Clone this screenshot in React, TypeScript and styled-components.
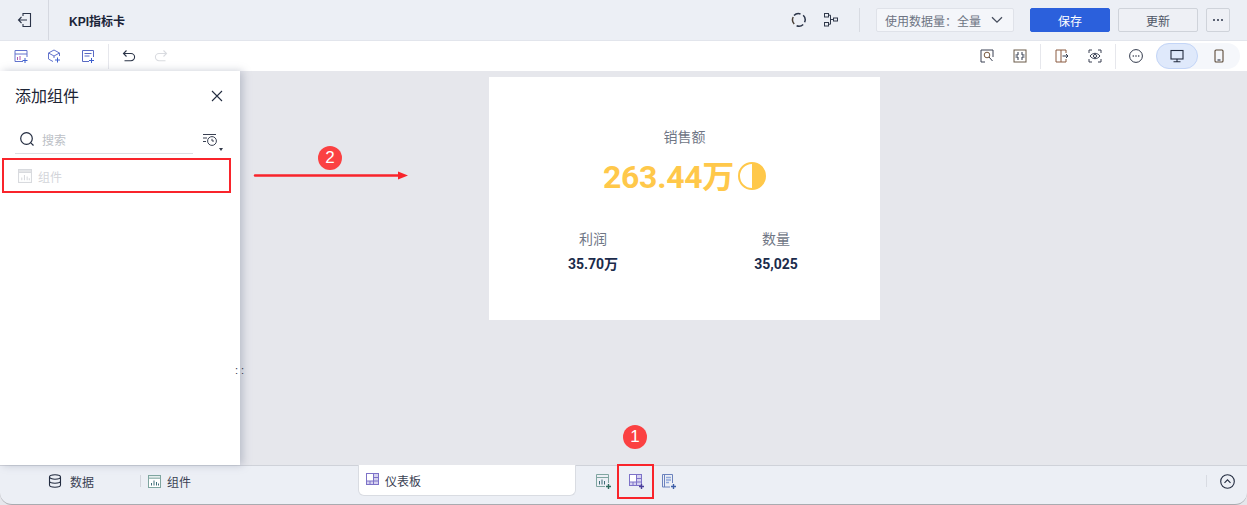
import React from 'react';
import styled, { createGlobalStyle } from 'styled-components';

const GlobalStyle = createGlobalStyle`
  html, body { margin: 0; padding: 0; background: #fff; }
  body { font-family: "Liberation Sans", "Noto Sans CJK SC", sans-serif; overflow: hidden; }
`;

const Page = styled.div`
  position: relative;
  width: 1247px;
  height: 505px;
  display: flex;
  flex-direction: column;
  overflow: hidden;
  color: #1d2b45;
`;

const TopBar = styled.header`
  height: 41px;
  box-sizing: border-box;
  flex: none;
  display: flex;
  align-items: center;
  background: #eceff5;
  border-bottom: 1px solid #e2e5ec;
`;

const BackCell = styled.div`
  width: 49px;
  height: 40px;
  box-sizing: border-box;
  display: flex;
  align-items: center;
  justify-content: center;
  border-right: 1px solid #d5d8e0;
`;

const Title = styled.div`
  margin-left: 20px;
  font-size: 12px;
  font-weight: 700;
  color: #1a2438;
  flex: 1;
`;

const TopActions = styled.div`
  display: flex;
  align-items: center;
  margin-right: 17px;
`;

const DataSelect = styled.div`
  width: 138px;
  height: 24px;
  box-sizing: border-box;
  display: flex;
  align-items: center;
  justify-content: space-between;
  padding: 0 10px 0 8px;
  background: #f4f6fa;
  border: 1px solid #dfe2e9;
  border-radius: 2px;
  font-size: 12px;
  color: #6d7483;
  margin-right: 16px;
`;

const Button = styled.button<{ $primary?: boolean; $w: number }>`
  width: ${p => p.$w}px;
  height: 24px;
  box-sizing: border-box;
  margin: 0 8px 0 0;
  padding: 0;
  border-radius: 2px;
  font-family: inherit;
  font-size: 12px;
  display: flex;
  align-items: center;
  justify-content: center;
  background: ${p => (p.$primary ? '#2b60dc' : '#eef0f5')};
  color: ${p => (p.$primary ? '#fff' : '#4f5666')};
  border: 1px solid ${p => (p.$primary ? '#2b60dc' : '#cfd3da')};
  &:last-child { margin-right: 0; }
`;

const VLine = styled.span<{ $h: number; $mx: number; $c?: string }>`
  width: 1px;
  height: ${p => p.$h}px;
  flex: none;
  background: ${p => p.$c ?? '#d8dbe2'};
  margin: 0 ${p => p.$mx}px;
`;

const ToolBar = styled.div`
  height: 30px;
  flex: none;
  display: flex;
  align-items: center;
  background: #fff;
  padding: 0 7px 0 14px;
`;

const ToolGroup = styled.div`
  display: flex;
  align-items: center;
  flex: 1;
`;

const IconSlot = styled.span<{ $w: number }>`
  width: ${p => p.$w}px;
  flex: none;
  display: flex;
  align-items: center;
  justify-content: flex-start;
  line-height: 0;
`;

const DeviceSwitch = styled.div`
  width: 84px;
  height: 26px;
  display: flex;
  border-radius: 13px;
  background: #f5f7fb;
`;

const DeviceTab = styled.div<{ $active?: boolean }>`
  width: 42px;
  height: 26px;
  box-sizing: border-box;
  display: flex;
  align-items: center;
  justify-content: center;
  border-radius: 13px;
  background: ${p => (p.$active ? '#dfe9fb' : 'transparent')};
  border: 1px solid ${p => (p.$active ? '#c3d5f7' : 'transparent')};
`;

const Main = styled.main`
  flex: 1;
  min-height: 0;
  display: flex;
  background: #e6e7ec;
`;

const Panel = styled.aside`
  position: relative;
  width: 240px;
  flex: none;
  background: #fff;
  box-shadow: 3px 0 8px rgba(120, 128, 150, 0.4);
  z-index: 1;
`;

const PanelHead = styled.div`
  height: 49px;
  display: flex;
  align-items: center;
  justify-content: space-between;
  padding: 0 17px 0 15px;
`;

const PanelTitle = styled.span`
  font-size: 16px;
  color: #1d2536;
  margin-bottom: 2px;
`;

const SearchRow = styled.div`
  display: flex;
  align-items: flex-start;
  padding: 8px 0 0 15px;
`;

const SearchBox = styled.div`
  width: 178px;
  height: 26px;
  box-sizing: border-box;
  display: flex;
  align-items: center;
  gap: 7px;
  padding: 0 0 3px 4px;
  border-bottom: 1px solid #dcdee3;
  font-size: 12px;
  color: #bcbfc6;
`;

const FilterBtn = styled.div`
  position: relative;
  margin: 5px 0 0 9px;
  line-height: 0;
`;

const Caret = styled.i`
  position: absolute;
  left: 17px;
  top: 15px;
  width: 0;
  height: 0;
  border: 2.5px solid transparent;
  border-top: 3px solid #333a4a;
`;

const ComponentItem = styled.div`
  height: 30px;
  margin-top: 7px;
  padding-left: 18px;
  display: flex;
  align-items: center;
  gap: 6px;
  font-size: 12px;
  color: #d3d5da;
`;

const ResizeDots = styled.div`
  position: absolute;
  left: 235px;
  top: 293px;
  font-size: 11px;
  line-height: 12px;
  white-space: pre;
  color: #30384a;
`;

const Canvas = styled.section`
  flex: 1;
  padding: 6px 0 0 249px;
`;

const KpiCard = styled.div`
  width: 391px;
  height: 243px;
  box-sizing: border-box;
  background: #fff;
  padding-top: 51px;
  display: flex;
  flex-direction: column;
  align-items: center;
`;

const KpiLabel = styled.div`
  font-size: 14px;
  line-height: 18px;
  color: #6f7685;
`;

const MainValue = styled.div`
  display: flex;
  align-items: center;
  gap: 4px;
  margin-top: 6px;
  height: 44px;
  font-family: Roboto, "Noto Sans CJK SC", sans-serif;
  font-size: 32px;
  font-weight: 700;
  letter-spacing: -0.3px;
  color: #ffc84a;
  svg { margin-top: 4px; }
`;

const SubRow = styled.div`
  width: 100%;
  display: grid;
  grid-template-columns: 208px 1fr;
  margin-top: 34px;
  box-sizing: border-box;
`;

const SubMetric = styled.div<{ $ml: number }>`
  width: 100px;
  margin-left: ${p => p.$ml}px;
  display: flex;
  flex-direction: column;
  align-items: center;
  gap: 7px;
`;

const SubValue = styled.div`
  font-family: Roboto, "Noto Sans CJK SC", sans-serif;
  font-size: 14px;
  line-height: 18px;
  font-weight: 700;
  color: #1b2b4b;
`;

const BottomWrap = styled.div`
  height: 40px;
  flex: none;
  background: #e6e7ec;
`;

const BottomBar = styled.footer`
  position: relative;
  height: 40px;
  box-sizing: border-box;
  display: flex;
  align-items: flex-start;
  background: #eceff5;
  border-top: 1px solid #cfd2d9;
  border-bottom: 1px solid #a9abb0;
  border-radius: 0 0 12px 12px;
  font-size: 12px;
  color: #3a4153;
`;

const BottomTab = styled.div<{ $w: number; $pl: number; $gap: number }>`
  width: ${p => p.$w}px;
  height: 30px;
  box-sizing: border-box;
  padding-left: ${p => p.$pl}px;
  display: flex;
  align-items: center;
  gap: ${p => p.$gap}px;
`;

const TabDivider = styled.span`
  width: 1px;
  height: 12px;
  margin-right: 1px;
  background: #d2d5dc;
`;

const SheetTab = styled.div`
  width: 218px;
  height: 31px;
  margin: -1px 0 0 77px;
  box-sizing: border-box;
  display: flex;
  align-items: center;
  gap: 3px;
  padding-left: 7px;
  background: #fff;
  border: 1px solid #d9dce2;
  border-top: none;
  border-radius: 0 0 6px 6px;
`;

const SheetTools = styled.div`
  display: flex;
  align-items: center;
  margin-left: 20px;
  height: 30px;
  flex: 1;
`;

const BottomEnd = styled.div`
  width: 29px;
  height: 30px;
  display: flex;
  align-items: center;
  gap: 13px;
  margin-right: 12px;
`;

const RedBox = styled.div<{ $x: number; $y: number; $w: number; $h: number }>`
  position: absolute;
  left: ${p => p.$x}px;
  top: ${p => p.$y}px;
  width: ${p => p.$w}px;
  height: ${p => p.$h}px;
  box-sizing: border-box;
  border: 2px solid #f9242b;
  pointer-events: none;
  z-index: 3;
`;

const Badge = styled.div<{ $x: number; $y: number }>`
  position: absolute;
  left: ${p => p.$x}px;
  top: ${p => p.$y}px;
  width: 24px;
  height: 24px;
  border-radius: 50%;
  background: #fb4142;
  color: #fff;
  font-size: 17px;
  line-height: 24px;
  text-align: center;
  z-index: 3;
`;

const Arrow = styled.svg`
  position: absolute;
  left: 253px;
  top: 169px;
  z-index: 3;
`;

type IconProps = { c?: string };

const BackIcon = () => (
  <svg width="16" height="16" viewBox="0 0 16 16" fill="none" stroke="#2b3448" strokeWidth="1.1">
    <path d="M7 4V1.500h7.500v13H7V12" />
    <path d="M11 8H2.500M5.500 5l-3 3 3 3" />
  </svg>
);

const RefreshIcon = () => (
  <svg width="16" height="16" viewBox="0 0 16 16" fill="none" strokeWidth="1.5">
    <path d="M3 3.600A6.200 6.200 0 0 1 9.500 2" stroke="#2b3448" />
    <path d="M12.200 3.200a6.200 6.200 0 0 1 1.400 7" stroke="#2b3448" />
    <path d="M12.200 12.500A6.200 6.200 0 0 1 5.600 13.800" stroke="#2b3448" />
    <path d="M3.200 12a6.200 6.200 0 0 1-1-7" stroke="#4a4038" />
  </svg>
);

const LineageIcon = () => (
  <svg width="16" height="16" viewBox="0 0 16 16" fill="none" stroke="#30384a" strokeWidth="1">
    <rect x="1.500" y="1.500" width="4" height="3.500" />
    <rect x="1.500" y="10.500" width="4" height="3.500" />
    <rect x="10.500" y="6" width="4" height="3" />
    <path d="M5.500 3.200H7.500V12.200H5.500M7.500 7.500h3" />
  </svg>
);

const MoreDots = () => (
  <svg width="12" height="4" viewBox="0 0 12 4" fill="#2b3448">
    <circle cx="2" cy="2" r="1" />
    <circle cx="6" cy="2" r="1" />
    <circle cx="10" cy="2" r="1" />
  </svg>
);

const Chevron = () => (
  <svg width="12" height="8" viewBox="0 0 12 8" fill="none" stroke="#474e5e" strokeWidth="1.300">
    <path d="M1 1.200L6 6.200l5-5" />
  </svg>
);

const AddTableIcon = () => (
  <svg width="14" height="14" viewBox="0 0 14 14" fill="none" stroke="#6273cd" strokeWidth="1">
    <path d="M9 12.500H1V1.500h12V8M1 5h12" />
    <path d="M3.500 11V8M6 11V7" stroke="#b05bb0" />
    <path d="M11 9v5M8.500 11.500h5" stroke="#3e60cf" />
  </svg>
);

const AddCubeIcon = () => (
  <svg width="14" height="14" viewBox="0 0 14 14" fill="none" stroke="#6273cd" strokeWidth="1">
    <path d="M7 1L1.500 4v6L6 12.500M7 1l5.500 3v3M1.500 4L7 7l5.500-3M7 7v2" />
    <path d="M10.500 8.500v5M8 11h5" stroke="#3e60cf" />
  </svg>
);

const AddFormIcon = () => (
  <svg width="14" height="14" viewBox="0 0 14 14" fill="none" stroke="#5a6bc4" strokeWidth="1">
    <path d="M8 12.500H1.500v-11h11V8M3.500 4.500h7M3.500 7h5" />
    <path d="M10.500 9v5M8 11.500h5" stroke="#3e60cf" />
  </svg>
);

const UndoIcon = ({ c = '#2b3448' }: IconProps) => (
  <svg width="14" height="14" viewBox="0 0 14 14" fill="none" stroke={c} strokeWidth="1.100">
    <path d="M4.500 1.500L1.500 4.500l3 3" />
    <path d="M1.500 4.500H9a3.600 3.600 0 0 1 0 7.200H2.500" />
  </svg>
);

const RedoIcon = () => (
  <svg width="14" height="14" viewBox="0 0 14 14" fill="none" stroke="#d9dbe0" strokeWidth="1.100">
    <path d="M9.500 1.500l3 3-3 3" />
    <path d="M12.500 4.500H5a3.600 3.600 0 0 0 0 7.200h6.500" />
  </svg>
);

const FrameSearchIcon = () => (
  <svg width="14" height="14" viewBox="0 0 14 14" fill="none" stroke="#3a4153" strokeWidth="1">
    <path d="M5 13H1V1h12v7" />
    <circle cx="7" cy="6" r="2.800" stroke="#7a5a40" />
    <path d="M9 8l3.500 4" />
  </svg>
);

const FitIcon = () => (
  <svg width="14" height="14" viewBox="0 0 14 14" fill="none" stroke="#6a5a48" strokeWidth="1">
    <rect x="1" y="1" width="12" height="12" />
    <path d="M5 3v3H2.500M9 3v3h2.500M5 11V8H2.500M9 11V8h2.500" stroke="#2b3448" />
  </svg>
);

const ExportIcon = () => (
  <svg width="14" height="14" viewBox="0 0 14 14" fill="none" stroke="#30384a" strokeWidth="1">
    <path d="M6 1H1v12h5V1h5v3M11 10v3H6" stroke="#8a5a40" />
    <path d="M7.500 7H13M11 5l2 2-2 2" />
  </svg>
);

const EyeIcon = () => (
  <svg width="14" height="14" viewBox="0 0 14 14" fill="none" stroke="#3a4153" strokeWidth="1">
    <path d="M1 4V1h3M10 1h3v3M13 10v3h-3M4 13H1v-3" />
    <path d="M2 7c2.800-3.600 7.200-3.600 10 0-2.800 3.600-7.200 3.600-10 0z" />
    <circle cx="7" cy="7" r="1.600" />
  </svg>
);

const MoreCircleIcon = () => (
  <svg width="14" height="14" viewBox="0 0 14 14" fill="#30384a">
    <circle cx="7" cy="7" r="6.400" fill="none" stroke="#30384a" strokeWidth="1" />
    <circle cx="4.300" cy="7" r="0.800" />
    <circle cx="7" cy="7" r="0.800" />
    <circle cx="9.700" cy="7" r="0.800" />
  </svg>
);

const DesktopIcon = () => (
  <svg width="14" height="14" viewBox="0 0 14 14" fill="none" stroke="#232c40" strokeWidth="1.100">
    <rect x="1" y="1.500" width="12" height="8.500" />
    <path d="M7 10v2.500M3.500 12.800h7" />
  </svg>
);

const PhoneIcon = () => (
  <svg width="14" height="14" viewBox="0 0 14 14" fill="none" stroke="#5b4a38" strokeWidth="1.100">
    <rect x="3" y="1" width="8" height="12" rx="1" />
    <path d="M5.500 11h3" stroke="#232c40" />
  </svg>
);

const CloseIcon = () => (
  <svg width="12" height="12" viewBox="0 0 12 12" fill="none" stroke="#232c40" strokeWidth="1.100">
    <path d="M1 1l10 10M11 1L1 11" />
  </svg>
);

const SearchIcon = () => (
  <svg width="16" height="16" viewBox="0 0 16 16" fill="none" stroke="#232c40" strokeWidth="1.200">
    <circle cx="7.500" cy="7.500" r="5.800" />
    <path d="M11.800 11.800L14.500 14.500" />
  </svg>
);

const FilterIcon = () => (
  <svg width="16" height="14" viewBox="0 0 16 14" fill="none" stroke="#3a4153" strokeWidth="1">
    <path d="M1 1.500h13M1 5h4M1 8.500h3" />
    <circle cx="10" cy="8" r="4.400" />
    <path d="M10 5.800V8h2" />
  </svg>
);

const ChartTileIcon = ({ c = '#7fa5a0', w = 13, fill = '#e4edec' }: IconProps & { w?: number; fill?: string }) => (
  <svg width={w} height={w} viewBox="0 0 13 13" fill="none" stroke={c} strokeWidth="1">
    <rect x="0.500" y="0.500" width="12" height="12" fill="#fff" />
    <rect x="0.500" y="0.500" width="12" height="2.700" fill={fill} />
    <path d="M3.500 10.500V8M6 10.500V5.500M8.500 10.500V7M10.500 10.500V8.500" stroke={c === '#7fa5a0' ? '#3f6d78' : c} />
  </svg>
);

const DatabaseIcon = () => (
  <svg width="14" height="14" viewBox="0 0 14 14" fill="none" stroke="#232c40" strokeWidth="1.100">
    <ellipse cx="7" cy="3" rx="5.500" ry="2.200" />
    <path d="M1.500 3v8c0 1.200 2.500 2.200 5.500 2.200s5.500-1 5.500-2.200V3M1.500 7c0 1.200 2.500 2.200 5.500 2.200S12.500 8.200 12.500 7" />
  </svg>
);

const DashGridIcon = ({ plus }: { plus?: boolean }) => (
  <svg width="16" height="15" viewBox="0 0 16 15" fill="none" stroke="#7d72c8" strokeWidth="1">
    <rect x="0.500" y="0.500" width="12" height="11" fill="#d6d2f0" />
    <rect x="0.500" y="0.500" width="7" height="7.500" fill="#fff" />
    <path d="M7.500 4.500H12.500M7.500 8H12.500M7.500 8V11.500M4 8v3.500" />
    {plus && <path d="M12.500 10v5M10 12.500h5" stroke="#4b3f9a" strokeWidth="1.400" />}
  </svg>
);

const AddChartIcon = () => (
  <svg width="16" height="15" viewBox="0 0 16 15" fill="none" stroke="#7fa5a0" strokeWidth="1">
    <path d="M9 12.500H0.500V0.500H12.500V9M0.500 3.500H12.500" />
    <path d="M3.500 10.500V7M6 10.500V5.500M8.500 10.500V7" stroke="#3f6d78" />
    <path d="M12.500 10v5M10 12.500h5" stroke="#2f6a5e" strokeWidth="1.400" />
  </svg>
);

const AddReportIcon = () => (
  <svg width="16" height="15" viewBox="0 0 16 15" fill="none" stroke="#6b82bd" strokeWidth="1">
    <path d="M9 13H1.500V0.500H11.500V9M3.500 0.500V13" />
    <path d="M5 3.500h5M5 6h5M5 8.500h3" stroke="#8fa8dc" strokeWidth="1.400" />
    <path d="M12.500 10v5M10 12.500h5" stroke="#3e5fa8" strokeWidth="1.400" />
  </svg>
);

const ChevronCircleIcon = () => (
  <svg width="15" height="15" viewBox="0 0 15 15" fill="none" stroke="#232c40" strokeWidth="1.100">
    <circle cx="7.500" cy="7.500" r="6.800" />
    <path d="M4.500 8.800L7.500 5.800l3 3" />
  </svg>
);

const HalfCircle = () => (
  <svg width="28" height="28" viewBox="0 0 28 28">
    <circle cx="14" cy="14" r="13" fill="none" stroke="#ffc84a" strokeWidth="2" />
    <path d="M14 1a13 13 0 0 1 0 26z" fill="#ffc84a" />
  </svg>
);

export default function App() {
  return (
    <Page>
      <GlobalStyle />
      <TopBar>
        <BackCell><BackIcon /></BackCell>
        <Title>KPI指标卡</Title>
        <TopActions>
          <IconSlot $w={32}><RefreshIcon /></IconSlot>
          <IconSlot $w={20}><LineageIcon /></IconSlot>
          <VLine $h={24} $mx={16} />
          <DataSelect>
            <span>使用数据量：全量</span>
            <Chevron />
          </DataSelect>
          <Button $primary $w={80}>保存</Button>
          <Button $w={80}>更新</Button>
          <Button $w={24}><MoreDots /></Button>
        </TopActions>
      </TopBar>

      <ToolBar>
        <ToolGroup>
          <IconSlot $w={33}><AddTableIcon /></IconSlot>
          <IconSlot $w={34}><AddCubeIcon /></IconSlot>
          <IconSlot $w={27}><AddFormIcon /></IconSlot>
          <VLine $h={25} $mx={0} $c="#e6e7ec" />
          <IconSlot $w={13} />
          <IconSlot $w={32}><UndoIcon /></IconSlot>
          <IconSlot $w={14}><RedoIcon /></IconSlot>
        </ToolGroup>
        <IconSlot $w={33}><FrameSearchIcon /></IconSlot>
        <IconSlot $w={27}><FitIcon /></IconSlot>
        <VLine $h={25} $mx={0} $c="#e6e7ec" />
        <IconSlot $w={14} />
        <IconSlot $w={33}><ExportIcon /></IconSlot>
        <IconSlot $w={27}><EyeIcon /></IconSlot>
        <VLine $h={25} $mx={0} $c="#e6e7ec" />
        <IconSlot $w={13} />
        <IconSlot $w={27}><MoreCircleIcon /></IconSlot>
        <DeviceSwitch>
          <DeviceTab $active><DesktopIcon /></DeviceTab>
          <DeviceTab><PhoneIcon /></DeviceTab>
        </DeviceSwitch>
      </ToolBar>

      <Main>
        <Panel>
          <PanelHead>
            <PanelTitle>添加组件</PanelTitle>
            <CloseIcon />
          </PanelHead>
          <SearchRow>
            <SearchBox>
              <SearchIcon />
              <span>搜索</span>
            </SearchBox>
            <FilterBtn>
              <FilterIcon />
              <Caret />
            </FilterBtn>
          </SearchRow>
          <ComponentItem>
            <ChartTileIcon c="#d8dade" w={14} fill="#e6e7ea" />
            <span>组件</span>
          </ComponentItem>
          <ResizeDots>: :</ResizeDots>
        </Panel>
        <Canvas>
          <KpiCard>
            <KpiLabel>销售额</KpiLabel>
            <MainValue>
              <span>263.44万</span>
              <HalfCircle />
            </MainValue>
            <SubRow>
              <SubMetric $ml={54}>
                <KpiLabel>利润</KpiLabel>
                <SubValue>35.70万</SubValue>
              </SubMetric>
              <SubMetric $ml={29}>
                <KpiLabel>数量</KpiLabel>
                <SubValue>35,025</SubValue>
              </SubMetric>
            </SubRow>
          </KpiCard>
        </Canvas>
      </Main>

      <BottomWrap>
        <BottomBar>
          <BottomTab $w={140} $pl={48} $gap={8}>
            <DatabaseIcon />
            <span>数据</span>
          </BottomTab>
          <BottomTab $w={141} $pl={0} $gap={6}>
            <TabDivider />
            <ChartTileIcon />
            <span>组件</span>
          </BottomTab>
          <SheetTab>
            <DashGridIcon />
            <span>仪表板</span>
          </SheetTab>
          <SheetTools>
            <IconSlot $w={33}><AddChartIcon /></IconSlot>
            <IconSlot $w={32}><DashGridIcon plus /></IconSlot>
            <IconSlot $w={20}><AddReportIcon /></IconSlot>
          </SheetTools>
          <BottomEnd>
            <VLine $h={12} $mx={0} />
            <ChevronCircleIcon />
          </BottomEnd>
        </BottomBar>
      </BottomWrap>

      <RedBox $x={2} $y={158} $w={229} $h={35} />
      <RedBox $x={617} $y={464} $w={37} $h={35} />
      <Badge $x={623} $y={425}>1</Badge>
      <Badge $x={318} $y={146}>2</Badge>
      <Arrow width="156" height="12" viewBox="0 0 156 12">
        <path d="M2 6.500H146" stroke="#f9242b" strokeWidth="2.400" strokeLinecap="round" />
        <path d="M145 2.500L155 6.500l-10 4z" fill="#f9242b" />
      </Arrow>
    </Page>
  );
}
